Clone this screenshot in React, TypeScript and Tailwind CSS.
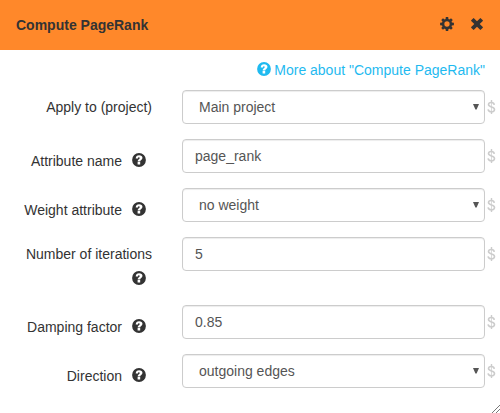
import React from 'react';

function QuestionIcon({ className = '' }: { className?: string }) {
  return (
    <svg viewBox="0 0 14 14" className={`h-[14px] w-[14px] shrink-0 ${className}`} fill="currentColor">
      <path
        fillRule="evenodd"
        d="M7 .1a6.9 6.9 0 1 1 0 13.8A6.9 6.9 0 0 1 7 .1ZM3.7 5.6h2.3c0-.9.3-1.3.9-1.3.5 0 .8.3.8.75 0 .55-.3.75-.8 1.15-.8.65-1.2 1.15-1.2 2.2h2.5c0-.5.2-.7.75-1.15.85-.65 1.5-1.3 1.5-2.4 0-1.65-1.3-2.65-3.3-2.65-2.15 0-3.4 1.2-3.45 3.4ZM5.6 9.1v2.4h2.6V9.1Z"
      />
    </svg>
  );
}

function CogIcon() {
  return (
    <svg viewBox="-7 -7 14 14" className="h-[14px] w-[14px]">
      <circle r="3.9" fill="none" stroke="currentColor" strokeWidth="2.5" />
      {[0, 45, 90, 135, 180, 225, 270, 315].map((angle) => (
        <path key={angle} d="M-1.5-4.6-1.2-6.9H1.2L1.5-4.6Z" fill="currentColor" transform={`rotate(${angle})`} />
      ))}
    </svg>
  );
}

function RemoveIcon() {
  return (
    <svg viewBox="0 0 14 14" className="h-[14px] w-[14px]" fill="currentColor">
      <path d="m3.9 1.2 3.1 3.1 3.1-3.1q.3-.3.6 0l2.1 2.1q.3.3 0 .6L9.7 7l3.1 3.1q.3.3 0 .6l-2.1 2.1q-.3.3-.6 0L7 9.7l-3.1 3.1q-.3.3-.6 0l-2.1-2.1q-.3-.3 0-.6L4.3 7 1.2 3.9q-.3-.3 0-.6l2.1-2.1q.3-.3.6 0Z" />
    </svg>
  );
}

function DollarIcon() {
  return (
    <svg viewBox="0 0 14 14" className="-ml-[1px] mt-[10px] h-[14px] w-[14px] shrink-0 text-[#cccccc]" fill="none" stroke="currentColor">
      <path d="M7.5 0v2.5M7.5 11.5V14" strokeWidth="1.4" />
      <path d="M7.5 2.5v9" strokeWidth="0.7" />
      <path d="M10.3 4.8C10.1 3.2 9.1 2.5 7.4 2.5S4.5 3.2 4.5 4.6c0 1.4 1.1 1.8 2.9 2.3s3.1 1 3.1 2.5-1.2 2.3-3.1 2.3-3.1-.8-3.3-2.4" strokeWidth="1.6" />
    </svg>
  );
}

type Field = { label: string; value: string; select?: boolean; help?: boolean; wraps?: boolean };

const fields: Field[] = [
  { label: 'Apply to (project)', value: 'Main project', select: true },
  { label: 'Attribute name', value: 'page_rank', help: true },
  { label: 'Weight attribute', value: 'no weight', select: true, help: true },
  { label: 'Number of iterations', value: '5', help: true, wraps: true },
  { label: 'Damping factor', value: '0.85', help: true },
  { label: 'Direction', value: 'outgoing edges', select: true, help: true },
];

function FieldRow({ label, value, select, help, wraps }: Field) {
  return (
    <div className={`flex items-start ${wraps ? 'h-[53px]' : 'h-[34px]'}`}>
      <div className={`flex w-[152px] shrink-0 justify-end text-[#333333] ${wraps ? 'flex-col items-end pt-[7px]' : help ? 'pt-[12px]' : 'pt-[7px]'}`}>
        <span className="whitespace-nowrap">{label}</span>
        {help && <QuestionIcon className={wraps ? 'mr-[6px] mt-[7px]' : 'ml-[10px] mr-[6px] mt-[2px]'} />}
      </div>
      <div className={`ml-[30px] flex h-[34px] w-[303px] shrink-0 items-center justify-between rounded border border-[#cccccc] pr-[5px] text-[#555555] shadow-[inset_0_1px_1px_rgba(0,0,0,0.075)] ${select ? 'pl-[16px]' : 'pl-[12px]'}`}>
        <span>{value}</span>
        {select && (
          <svg viewBox="0 0 6 6" className="h-[6px] w-[6px]" fill="currentColor">
            <path d="M0 0h6L3.6 5.5H2.4Z" />
          </svg>
        )}
      </div>
      <DollarIcon />
    </div>
  );
}

export default function App() {
  return (
    <div className="relative h-[413px] w-[500px] overflow-hidden bg-white font-['Liberation_Sans',Arial,sans-serif] text-[14px] leading-[20px]">
      <header className="flex h-[50px] items-center justify-between bg-[#ff882a] pl-[16px] pr-[16px] text-[#333333]">
        <h1 className="font-bold">Compute PageRank</h1>
        <div className="-mt-[2px] flex gap-[16px]">
          <CogIcon />
          <RemoveIcon />
        </div>
      </header>
      <div className="flex h-[40px] justify-end pr-[15px] pt-[10px] text-[#1fbaf0]">
        <QuestionIcon className="mr-[3.5px] mt-[2px]" />
        <span>More about "Compute PageRank"</span>
      </div>
      <div className="flex flex-col gap-[15px]">
        {fields.map((field) => (
          <FieldRow key={field.label} {...field} />
        ))}
      </div>
      <svg viewBox="0 0 8 8" className="absolute bottom-0 right-0 h-[8px] w-[8px]" stroke="#555555" strokeWidth="0.8">
        <path d="M0 8 8 0M4 8 8 4" />
      </svg>
    </div>
  );
}
